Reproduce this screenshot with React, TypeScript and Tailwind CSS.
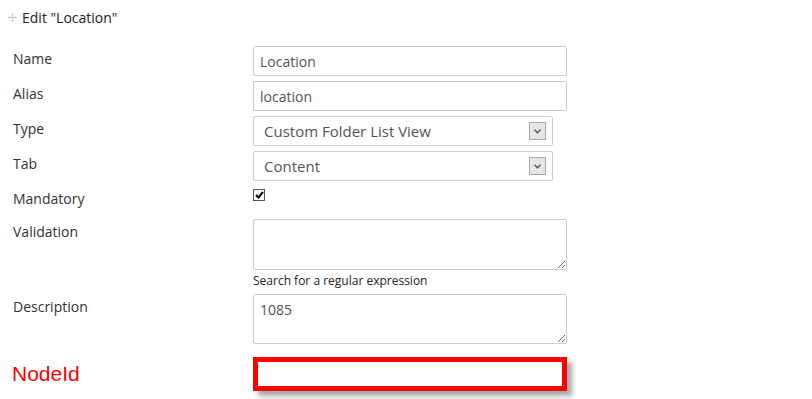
import React from 'react';

const labelCls = 'w-[240px] shrink-0 pt-[4px] text-[14px] leading-[18px] text-[#333]';
const inputCls =
  'h-[30px] w-[314px] rounded-[2px] border border-[#ccc] bg-white px-[6px] text-[14px] text-[#555] outline-none';

function SelectBox({ value }: { value: string }) {
  return (
    <div className="relative h-[30px] w-[300px] rounded-[2px] border border-[#ccc] bg-white">
      <div className="pl-[10px] text-[15px] leading-[29px] text-[#555]">{value}</div>
      <span className="absolute right-[6px] top-[5px] flex h-[18px] w-[17px] items-center justify-center border border-[#a9a9a9] bg-[#e6e6e6]">
        <svg width="7" height="5" viewBox="0 0 7 5">
          <path d="M0.5 0.8 L3.5 3.8 L6.5 0.8" fill="none" stroke="#555" strokeWidth="1.4" />
        </svg>
      </span>
    </div>
  );
}

export default function App() {
  return (
    <div className="h-[399px] w-[812px] overflow-hidden bg-white font-['Open_Sans',sans-serif]">
      <div className="flex h-[34px] items-center gap-[5px] pl-[8px] text-[14px] text-[#222]">
        <svg width="9" height="9" viewBox="0 0 9 9" fill="#c8c8c8">
          <rect x="4" y="1" width="1" height="7" />
          <rect x="1" y="4" width="7" height="1" />
          <path d="M4.5 0 L6 1.6 H3 Z" />
          <path d="M4.5 9 L6 7.4 H3 Z" />
          <path d="M0 4.5 L1.6 3 V6 Z" />
          <path d="M9 4.5 L7.4 3 V6 Z" />
        </svg>
        <span>Edit "Location"</span>
      </div>

      <div className="flex flex-col gap-[5px] pl-[13px] pt-[12px]">
        <div className="flex">
          <div className={labelCls}>Name</div>
          <input className={inputCls} defaultValue="Location" />
        </div>
        <div className="flex">
          <div className={labelCls}>Alias</div>
          <input className={inputCls} defaultValue="location" />
        </div>
        <div className="flex">
          <div className={labelCls}>Type</div>
          <SelectBox value="Custom Folder List View" />
        </div>
        <div className="flex">
          <div className={labelCls}>Tab</div>
          <SelectBox value="Content" />
        </div>
        <div className="flex h-[28px]">
          <div className={labelCls}>Mandatory</div>
          <span className="mt-[3px] flex h-[12px] w-[12px] items-center justify-center border border-[#555] bg-white">
            <svg width="9" height="8" viewBox="0 0 9 8">
              <path d="M1 4 L3.5 6.5 L8 1" fill="none" stroke="#000" strokeWidth="2" />
            </svg>
          </span>
        </div>
        <div className="flex">
          <div className={labelCls}>Validation</div>
          <div className="flex flex-col">
            <textarea className="h-[51px] w-[314px] rounded-[2px] border border-[#ccc] bg-white px-[6px] py-[4px] text-[14px] text-[#555] outline-none" />
            <div className="pt-[2px] text-[12px] leading-[17px] text-[#222]">Search for a regular expression</div>
          </div>
        </div>
        <div className="flex">
          <div className={labelCls}>Description</div>
          <textarea
            className="h-[50px] w-[314px] rounded-[2px] border border-[#ccc] bg-white px-[6px] py-[4px] text-[14px] text-[#555] outline-none"
            defaultValue="1085"
          />
        </div>
        <div className="mt-[8px] flex items-center">
          <div className="-ml-[1px] w-[241px] shrink-0 font-['Liberation_Sans',Arial,sans-serif] text-[21px] leading-[24px] text-[#ff0000]">
            NodeId
          </div>
          <div className="h-[34px] w-[314px] border-[5px] border-[#ff0000] bg-white shadow-[5px_5px_5px_rgba(0,0,0,0.35)]" />
        </div>
      </div>
    </div>
  );
}
